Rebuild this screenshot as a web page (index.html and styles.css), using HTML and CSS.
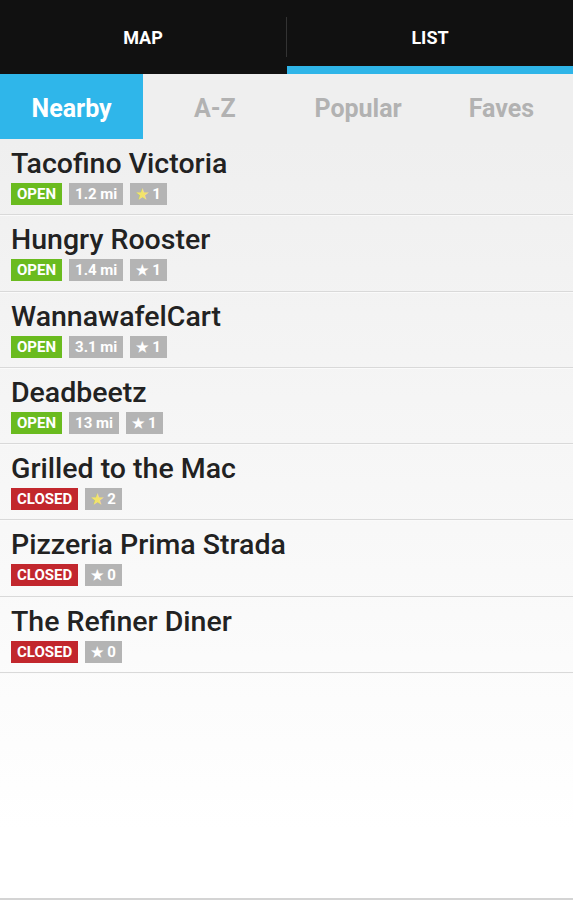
FILE: index.html
```html
<!DOCTYPE html>
<html lang="en">
<head>
  <meta charset="UTF-8" />
  <meta name="viewport" content="width=device-width, initial-scale=1.0" />
  <title>Food Carts</title>
  <link rel="stylesheet" href="styles.css">
</head>
<body>

  <div class="top-tabs">
    <div class="top-tab">MAP</div>
    <span class="divider"></span>
    <div class="top-tab active">LIST</div>
  </div>

  <div class="sort-tabs">
    <div class="sort-tab active">Nearby</div>
    <div class="sort-tab">A-Z</div>
    <div class="sort-tab">Popular</div>
    <div class="sort-tab">Faves</div>
  </div>

  <ul class="cart-list">
    <li class="cart">
      <div class="name">Tacofino Victoria</div>
      <div class="badges">
        <span class="badge open">OPEN</span>
        <span class="badge">1.2 mi</span>
        <span class="badge"><span class="star fave">★</span>1</span>
      </div>
    </li>
    <li class="cart">
      <div class="name">Hungry Rooster</div>
      <div class="badges">
        <span class="badge open">OPEN</span>
        <span class="badge">1.4 mi</span>
        <span class="badge"><span class="star">★</span>1</span>
      </div>
    </li>
    <li class="cart">
      <div class="name">WannawafelCart</div>
      <div class="badges">
        <span class="badge open">OPEN</span>
        <span class="badge">3.1 mi</span>
        <span class="badge"><span class="star">★</span>1</span>
      </div>
    </li>
    <li class="cart">
      <div class="name">Deadbeetz</div>
      <div class="badges">
        <span class="badge open">OPEN</span>
        <span class="badge">13 mi</span>
        <span class="badge"><span class="star">★</span>1</span>
      </div>
    </li>
    <li class="cart">
      <div class="name">Grilled to the Mac</div>
      <div class="badges">
        <span class="badge closed">CLOSED</span>
        <span class="badge"><span class="star fave">★</span>2</span>
      </div>
    </li>
    <li class="cart">
      <div class="name">Pizzeria Prima Strada</div>
      <div class="badges">
        <span class="badge closed">CLOSED</span>
        <span class="badge"><span class="star">★</span>0</span>
      </div>
    </li>
    <li class="cart">
      <div class="name">The Refiner Diner</div>
      <div class="badges">
        <span class="badge closed">CLOSED</span>
        <span class="badge"><span class="star">★</span>0</span>
      </div>
    </li>
  </ul>

</body>
</html>
```

FILE: styles.css
```css
html { height: 100%; }
body { margin: 0; min-height: 100%; font-family: Roboto, "Liberation Sans", sans-serif; color: #222; background: linear-gradient(#efefef 0, #efefef 140px, #ffffff 830px); box-shadow: inset 0 -2px 0 #d4d4d4; }

.top-tabs { display: flex; align-items: center; height: 74px; background: #111; }
.top-tab { flex: 1; height: 100%; display: flex; align-items: center; justify-content: center; color: #fff; font-size: 18px; font-weight: bold; }
.top-tab.active { box-shadow: inset 0 -8px 0 #2fb5e8; }
.divider { width: 1px; height: 40px; background: #333; }

.sort-tabs { display: grid; grid-template-columns: repeat(4, 1fr); height: 65px; }
.sort-tab { display: flex; align-items: center; justify-content: center; padding-top: 3px; font-size: 25px; font-weight: bold; color: #b2b2b2; }
.sort-tab.active { background: #2fb6ea; color: #fff; }

.cart-list { list-style: none; margin: 0; padding: 0; }
.cart { padding: 8px 11px 9.3px; border-bottom: 1px solid #d9d9d9; box-shadow: 0 1px 0 #fafafa; }
.name { font-size: 28.5px; font-weight: 500; line-height: 32px; padding-top: 1px; margin-bottom: -1px; }
.badges { display: flex; gap: 7px; margin-top: 4px; }
.badge { height: 22px; line-height: 22px; padding: 0 6px; background: #b4b4b4; color: #fff; font-size: 15px; font-weight: bold; }
.badge.open { background: #6abb1f; }
.badge.closed { background: #c2272d; }
.star { font-size: 14px; margin-right: 3px; }
.star.fave { color: #f3e36a; }
```
